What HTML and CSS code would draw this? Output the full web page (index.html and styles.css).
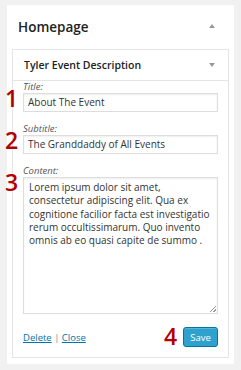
FILE: index.html
```html
<html>
<head>
<link rel="stylesheet" href="styles.css">
</head>
<body>
<div class="panel">
	<div class="panel-head">
		<h2>Homepage</h2>
		<span class="arrow-up"></span>
	</div>
	<div class="widget">
		<div class="widget-head">
			<h3>Tyler Event Description</h3>
			<span class="arrow-down"></span>
		</div>
		<div class="widget-body">
			<div class="field">
				<span class="num">1</span>
				<label>Title:</label>
				<div class="input">About The Event</div>
			</div>
			<div class="field">
				<span class="num">2</span>
				<label>Subtitle:</label>
				<div class="input">The Granddaddy of All Events</div>
			</div>
			<div class="field">
				<span class="num">3</span>
				<label>Content:</label>
				<div class="textarea">Lorem ipsum dolor sit amet, consectetur adipiscing elit. Qua ex cognitione facilior facta est investigatio rerum occultissimarum. Quo invento omnis ab eo quasi capite de summo .<span class="grip"></span></div>
			</div>
			<div class="actions">
				<div class="links"><a href="#">Delete</a> | <a href="#">Close</a></div>
				<div class="save-wrap">
					<span class="num num4">4</span>
					<button class="save">Save</button>
				</div>
			</div>
		</div>
	</div>
</div>
</body>
</html>
```

FILE: styles.css
```css
body{
	margin: 0;
	padding: 5px 7px 7px 7px;
	background: #f1f1f1;
	font-family: "Open Sans", "Liberation Sans", sans-serif;
	color: #444;
}

.panel{
	background: #fff;
	padding: 0 5px 6px 5px;
}

.panel-head{
	display: flex;
	align-items: center;
	justify-content: space-between;
	height: 44px;
	padding: 0 14px 0 6px;
}

.panel-head h2{
	margin: 0;
	font-size: 13.5px;
	font-weight: 600;
	color: #222;
}

.arrow-up{
	width: 0;
	height: 0;
	border-left: 3px solid transparent;
	border-right: 3px solid transparent;
	border-bottom: 4px solid #999;
	margin-bottom: 2px;
}

.arrow-down{
	width: 0;
	height: 0;
	border-left: 3px solid transparent;
	border-right: 3px solid transparent;
	border-top: 4px solid #999;
}

.widget{
	border: 1px solid #e5e5e5;
}

.widget-head{
	display: flex;
	align-items: center;
	justify-content: space-between;
	height: 30px;
	padding: 0 13px 0 11px;
	border-bottom: 1px solid #e5e5e5;
}

.widget-head h3{
	margin: 0;
	font-size: 10.5px;
	font-weight: 600;
	color: #222;
}

.widget-body{
	padding: 0 10px 10px 10px;
	display: flex;
	flex-direction: column;
	gap: 11px;
}

.field{
	position: relative;
	display: flex;
	flex-direction: column;
}

.field label{
	font-size: 9.5px;
	font-style: italic;
	line-height: 11px;
	margin-bottom: 1px;
	color: #555;
}

.input{
	height: 17px;
	border: 1px solid #ddd;
	box-shadow: inset 0 1px 2px rgba(0,0,0,0.07);
	font-size: 10px;
	line-height: 17px;
	padding: 0 4px;
	color: #333;
}

.textarea{
	position: relative;
	height: 130px;
	border: 1px solid #ddd;
	box-shadow: inset 0 1px 2px rgba(0,0,0,0.07);
	font-size: 10px;
	line-height: 13.3px;
	padding: 3px 2px 2px 5px;
	color: #333;
}

.grip{
	position: absolute;
	right: 1px;
	bottom: 1px;
	width: 6px;
	height: 6px;
	background: linear-gradient(135deg, transparent 45%, #999 45%, #999 55%, transparent 55%, transparent 75%, #999 75%, #999 85%, transparent 85%);
}

.num{
	position: absolute;
	left: -18px;
	top: 5px;
	font-size: 23px;
	line-height: 24px;
	font-weight: 600;
	color: #b30000;
}

.actions{
	display: flex;
	align-items: center;
	justify-content: space-between;
	margin-top: 2px;
}

.links{
	font-size: 9.5px;
	color: #888;
}

.links a{
	color: #0073aa;
}

.save-wrap{
	position: relative;
}

.num4{
	left: -19px;
	top: -3px;
}

.save{
	font-family: "Open Sans", "Liberation Sans", sans-serif;
	font-size: 9.5px;
	color: #fff;
	background: #2ea2cc;
	border: 1px solid #0074a2;
	border-radius: 3px;
	height: 20px;
	width: 35px;
	padding: 0;
	box-shadow: inset 0 1px 0 rgba(120,200,230,0.5);
}
```
